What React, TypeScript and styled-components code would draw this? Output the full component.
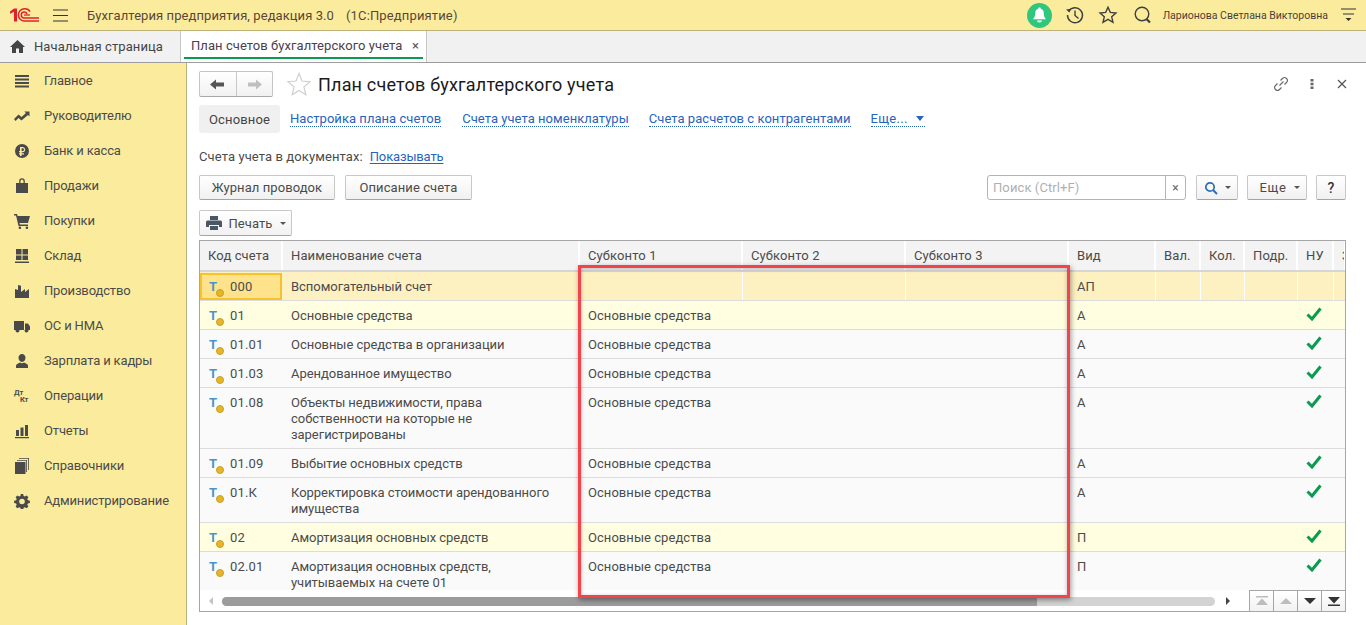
import React from "react";
import styled, { createGlobalStyle } from "styled-components";

const Global = createGlobalStyle`
  html, body { margin: 0; padding: 0; height: 625px; overflow: hidden; background: #fff; }
  body { font-family: Roboto, "Liberation Sans", sans-serif; font-size: 13px; color: #4b4b4b; }
  * { box-sizing: border-box; }
`;

const Page = styled.div`
  width: 1366px; height: 625px; display: flex; flex-direction: column; overflow: hidden;
`;

const TopBar = styled.header`
  height: 31px; flex: none; display: flex; align-items: center; background: #fbec9d;
  border-bottom: 1px solid #bdb27a; padding-left: 10px; position: relative;
`;
const Logo = styled.svg`width: 29px; height: 14px; flex: none;`;
const Burger = styled.svg`width: 15px; height: 13px; margin-left: 14px; flex: none;`;
const AppTitle = styled.span`
  margin-left: 19px; font-size: 13px; color: #5b4636; letter-spacing: 0.08px; white-space: pre;
`;
const AppKind = styled.span`margin-left: 12px; letter-spacing: 0.14px;`;
const TopRight = styled.div`
  margin-left: auto; display: flex; align-items: center; height: 100%; padding-right: 10px;
`;
const BellCircle = styled.span`
  width: 25px; height: 25px; border-radius: 50%; background: #2fc77d; display: flex;
  align-items: center; justify-content: center; margin-right: 13px;
`;
const TopIcon = styled.svg<{ $gap: number }>`
  width: 20px; height: 20px; flex: none; margin-right: ${(p) => p.$gap}px;
`;
const UserName = styled.span`font-size: 10.5px; color: #4a3f3a; white-space: nowrap; margin-left: 1px;`;
const UserMenu = styled.svg`width: 15px; height: 15px; margin-left: 13px; flex: none;`;

const TabBar = styled.nav`
  height: 32px; flex: none; display: flex; background: #f1f1f1; border-bottom: 1px solid #9c9c9c;
`;
const HomeTab = styled.div`
  width: 181px; display: flex; align-items: center; padding-left: 10px; gap: 9px;
  border-right: 1px solid #c6c6c6; font-size: 13px; letter-spacing: 0.1px; color: #444;
`;
const ActiveTab = styled.div`
  width: 246px; background: #fff; border-right: 1px solid #c6c6c6; display: flex; align-items: center;
  padding: 0 7px 3px 10px; position: relative; font-size: 13px; letter-spacing: 0.06px; color: #4a4050;
  justify-content: space-between;
  &::after { content: ""; position: absolute; left: 3px; right: 3px; bottom: 3px; height: 2px; background: #0a9a50; }
`;
const TabClose = styled.span`font-size: 13px; color: #555; line-height: 1;`;

const Body = styled.div`flex: 1; display: flex; min-height: 0;`;
const Sidebar = styled.aside`
  width: 187px; flex: none; background: #fbec9d; border-right: 1px solid #bdb27a;
`;
const SideItem = styled.div`
  height: 35px; display: flex; align-items: center; padding-left: 14px; gap: 14px;
  font-size: 13px; color: #4b4b4b; letter-spacing: -0.15px;
`;
const SideIcon = styled.svg`width: 16px; height: 16px; flex: none; fill: #4a4a4a;`;
const DtKt = styled.span`
  width: 16px; height: 16px; flex: none; display: flex; flex-direction: column; font-size: 7.5px; font-weight: 700;
  line-height: 7.5px; color: #4a4a4a; padding-top: 1px; letter-spacing: 0;
  span:last-child { margin-left: 6px; }
`;

const Main = styled.main`
  flex: 1; min-width: 0; padding: 8px 20px 0 12px; display: flex; flex-direction: column;
`;
const FormHead = styled.div`height: 26px; display: flex; align-items: center; flex: none;`;
const NavGroup = styled.div`
  width: 74px; height: 26px; display: flex; border: 1px solid #c4c4c4; border-bottom-color: #a8a8a8; border-radius: 2px;
  background: linear-gradient(#fff, #f1f1f1);
`;
const NavButton = styled.span<{ $first?: boolean }>`
  flex: 1; display: flex; align-items: center; justify-content: center;
  border-right: ${(p) => (p.$first ? "1px solid #c8c8c8" : "none")};
`;
const Arrow = styled.svg`width: 15px; height: 11px;`;
const FavStar = styled.svg`width: 24px; height: 24px; margin-left: 14px; flex: none;`;
const FormTitle = styled.h1`
  margin: 0 0 0 7px; font-weight: 400; font-size: 18px; color: #1a1a1a; letter-spacing: 0.19px; white-space: nowrap;
`;
const HeadTools = styled.div`margin-left: auto; display: flex; align-items: center; gap: 14.500px; margin-right: -4px;`;
const ToolIcon = styled.svg`width: 16px; height: 16px; flex: none;`;

const FormTabs = styled.div`height: 28px; margin-top: 8px; display: flex; align-items: center; flex: none;`;
const CurrentTab = styled.span`
  width: 81px; height: 28px; background: #f0f0f0; border-radius: 3px; display: flex; align-items: center;
  justify-content: center; color: #444; letter-spacing: 0.15px;
`;
const FormLink = styled.a<{ $gap: number; $wide?: boolean }>`
  margin-left: ${(p) => p.$gap}px; color: #2763c0; border-bottom: 1px dotted #2763c0; line-height: 15px;
  letter-spacing: ${(p) => (p.$wide ? "0.3px" : "0.04px")};
  display: inline-flex; align-items: center; white-space: nowrap;
`;
const MoreCaret = styled.span`
  width: 0; height: 0; margin-left: 8px; border-left: 4.5px solid transparent; border-right: 4.5px solid transparent;
  border-top: 5px solid #2763c0; margin-right: 1px;
`;

const InfoLine = styled.div`height: 16px; margin-top: 15px; display: flex; align-items: center; flex: none; letter-spacing: 0.1px;`;
const InfoLink = styled.a`margin-left: 7px; color: #2763c0; text-decoration: underline; text-underline-offset: 2px; letter-spacing: -0.15px;`;

const CommandRow = styled.div`height: 25px; margin-top: 11px; display: flex; align-items: stretch; flex: none;`;
const Button = styled.button<{ $w: number; $gap?: number; $inner?: number }>`
  width: ${(p) => p.$w}px; margin-left: ${(p) => p.$gap ?? 0}px; padding: 0; flex: none;
  font: inherit; color: #4b4b4b; letter-spacing: 0.08px;
  display: flex; align-items: center; justify-content: center; gap: ${(p) => p.$inner ?? 7}px;
  background: linear-gradient(#fff, #f1f1f1); border: 1px solid #c8c8c8; border-bottom-color: #a4a4a4; border-radius: 2px;
`;
const WideLabel = styled.span`letter-spacing: 0.6px; margin-left: 6px;`;
const Search = styled.div`
  width: 199px; margin-left: auto; display: flex; border: 1px solid #b4b4b4; border-radius: 3px; background: #fff;
`;
const SearchPlaceholder = styled.span`flex: 1; padding-left: 5px; color: #b0b0b0; line-height: 23px; letter-spacing: 0.1px;`;
const SearchClear = styled.span`
  width: 20px; border-left: 1px solid #b4b4b4; display: flex; align-items: center; justify-content: center; color: #666; font-size: 12px;
`;
const Caret = styled.span`
  width: 0; height: 0; border-left: 3px solid transparent; border-right: 3px solid transparent; border-top: 3.500px solid #555;
`;
const Help = styled.span`font-size: 14px; color: #333; font-weight: 500;`;

const PrintRow = styled.div`height: 26px; margin-top: 10px; display: flex; flex: none;`;

const Table = styled.div`
  margin-top: 4px; height: 372px; border: 1px solid #a6a6a6; position: relative; display: flex; flex-direction: column; flex: none;
  overflow: hidden;
`;
const COLS = "83px 297px 163px 163px 163px 87px 45px 44px 53px 36px 12px";
const HeadRow = styled.div`
  display: grid; grid-template-columns: ${COLS}; height: 31px; flex: none; border-bottom: 2px solid #d6d6d6;
`;
const HeadCell = styled.div`
  background: #f3f3f3; border-right: 2px solid #fff; padding-left: 8px; line-height: 29px; letter-spacing: 0.12px; white-space: nowrap; overflow: hidden; color: #4b4b4b;
`;
const Rows = styled.div`flex: 1; min-height: 0; overflow: hidden; background: #fff;`;
const Row = styled.div<{ $tone: "sel" | "hl" | "norm" }>`
  display: grid; grid-template-columns: ${COLS}; border-bottom: 1px solid #dcdcdc;
  background: ${(p) => (p.$tone === "sel" ? "#fdf1c2" : p.$tone === "hl" ? "#fffee0" : "#fafafa")};
`;
const Cell = styled.div<{ $sep?: boolean; $name?: boolean }>`
  padding: 7px 8px 5px; line-height: 16px; letter-spacing: ${(p) => (p.$name ? "-0.04px" : "0.05px")}; min-width: 0;
  border-right: ${(p) => (p.$sep ? "1px solid #fff" : "none")};
`;
const CodeCell = styled.div<{ $current?: boolean }>`
  display: flex; padding: 7px 0 5px 8px; line-height: 16px; letter-spacing: 0.15px;
  ${(p) => (p.$current ? "background:#fee28c; box-shadow: inset 0 0 0 2px #f6c129; margin: 1px 1px 0 0; padding-top: 6px; padding-bottom: 4px;" : "")}
`;
const AccountMark = styled.span`
  width: 22px; height: 16px; flex: none; position: relative; color: #4a94c9; font-weight: 700; font-size: 13px; line-height: 16px; padding-left: 1px;
  &::after { content: ""; position: absolute; left: 8px; top: 10px; width: 6px; height: 6px; border-radius: 50%; background: #e7b52c; border: 1px solid #c9a020; }
`;
const Check = styled.svg`width: 16px; height: 14px; display: block; margin: -1px 0 0 0;`;

const ScrollRow = styled.div`height: 21px; flex: none; display: flex; align-items: center; background: #fff;`;
const ScrollArrow = styled.span<{ $left?: boolean; $w: number }>`
  width: ${(p) => p.$w}px; flex: none; display: flex; justify-content: center;
  &::before { content: ""; width: 0; height: 0; border-top: 4px solid transparent; border-bottom: 4px solid transparent;
    ${(p) => (p.$left ? "border-right: 4px solid #c4c4c4;" : "border-left: 4px solid #444;")} }
`;
const Thumb = styled.div`
  width: 993px; height: 9px; border-radius: 5px; flex: none; overflow: hidden; background: #d3d3d3; display: flex; margin-top: 1px;
`;
const ThumbDark = styled.span`width: 815px; background: #9c9c9c;`;
const Pager = styled.div`height: 100%; width: 96px; margin-left: auto; display: flex; border-top: 1px solid #a6a6a6;`;
const PagerBtn = styled.span`
  flex: 1; display: flex; align-items: center; justify-content: center; border-left: 1px solid #a6a6a6;
  background: linear-gradient(#fff, #f2f2f2);
`;
const PagerIcon = styled.svg`width: 14px; height: 10px;`;

const Callout = styled.div`
  position: absolute; left: 378px; top: 24px; width: 492px; height: 333px; border: 3px solid #f4434a; pointer-events: none;
  box-shadow: 1px 2px 5px rgba(0,0,0,.4), inset 0 1px 4px rgba(0,0,0,.25);
`;

const sideIcons: Record<string, React.ReactNode> = {
  main: <path d="M1 2h14v2H1zM1 5.500h14v2H1zM1 9h14v2H1zM1 12.500h14v2H1z" />,
  boss: <path d="M0 11l4.500-4.500 3 2.500L12 5l-1.800-1.500H15.500V8.500L14 7 7.500 12.500 4.500 10 1.500 13z" />,
  bank: <path fillRule="evenodd" d="M8 1a7 7 0 1 1 0 14A7 7 0 0 1 8 1zM6 4v4H5v1.300h1v.9H5v1.300h1V13h1.600v-1.500H10v-1.300H7.600v-.9H9a2.700 2.700 0 0 0 0-5.300zm1.600 1.300H9a1.400 1.400 0 0 1 0 2.700H7.600z" />,
  sale: <path fillRule="evenodd" d="M2 5h3.200V3a2.800 2.800 0 0 1 5.600 0V5H14v10H2zM6.500 5h3V3a1.500 1.500 0 0 0-3 0z" />,
  buy: <path d="M0 1h3l.7 2H16l-2 7H5.500l.4 1.500H14V13H4.500L2 2.500H0zM5.500 13.500a1.300 1.300 0 1 1 0 2.500 1.300 1.300 0 0 1 0-2.500zM12.500 13.500a1.300 1.300 0 1 1 0 2.500 1.300 1.300 0 0 1 0-2.500z" />,
  stock: <path d="M2 1h5.500v5.500H2zM8.500 1H14v5.500H8.500zM2 7.500h5.500V12H2zM8.500 7.500H14V12H8.500zM1 13.500h14V15H1z" />,
  prod: <path d="M1 15V6l3 1V2l3 .8V9l4-3v3l4-3v9z" />,
  truck: <path d="M0 3h10v9H0zM11 5.500h3l2 3V12h-5zM3.500 10.500a2 2 0 1 1 0 4 2 2 0 0 1 0-4zM12.500 10.500a2 2 0 1 1 0 4 2 2 0 0 1 0-4z" />,
  staff: <path d="M8 1a3.500 3.500 0 0 1 3.500 3.800C11.500 7 10 9 8 9S4.500 7 4.500 4.800A3.500 3.500 0 0 1 8 1zM2 15v-2.500c0-1.500 3-2.500 4-3 1 1 3 1 4 0 1 .5 4 1.500 4 3V15z" />,
  report: <path d="M2 7h3v6H2zM6.500 4.500h3V13h-3zM11 2h3v11h-3zM1 14h14v1.200H1z" />,
  ref: <path d="M1 4h10.500v12H1zM3 2h10v12h-.8V2.800H3zM5 0h10v12h-.8V.8H5z" />,
  admin: <path fillRule="evenodd" d="M6.800 1h2.400l.4 2 1.300.6 1.800-1.100 1.700 1.700-1.100 1.800.6 1.300 2 .4v2.400l-2 .4-.6 1.300 1.100 1.800-1.700 1.700-1.800-1.100-1.300.6-.4 2H6.800l-.4-2-1.300-.6-1.800 1.100-1.700-1.700 1.100-1.800-.6-1.300-2-.4V7.700l2-.4.6-1.300-1.100-1.800 1.700-1.700 1.800 1.100 1.300-.6zM8 5.700a2.800 2.800 0 1 0 0 5.600 2.800 2.800 0 0 0 0-5.600z" />,
};

const sideItems: [string, string][] = [
  ["main", "Главное"], ["boss", "Руководителю"], ["bank", "Банк и касса"], ["sale", "Продажи"],
  ["buy", "Покупки"], ["stock", "Склад"], ["prod", "Производство"], ["truck", "ОС и НМА"],
  ["staff", "Зарплата и кадры"], ["dk", "Операции"], ["report", "Отчеты"], ["ref", "Справочники"], ["admin", "Администрирование"],
];

const heads = ["Код счета", "Наименование счета", "Субконто 1", "Субконто 2", "Субконто 3", "Вид", "Вал.", "Кол.", "Подр.", "НУ", "З"];

type Acc = { code: string; name: React.ReactNode; sub?: string; kind: string; nu?: boolean; tone: "sel" | "hl" | "norm" };
const FA = "Основные средства";
const accounts: Acc[] = [
  { code: "000", name: "Вспомогательный счет", kind: "АП", tone: "sel" },
  { code: "01", name: FA, sub: FA, kind: "А", nu: true, tone: "hl" },
  { code: "01.01", name: "Основные средства в организации", sub: FA, kind: "А", nu: true, tone: "norm" },
  { code: "01.03", name: "Арендованное имущество", sub: FA, kind: "А", nu: true, tone: "norm" },
  { code: "01.08", name: <>Объекты недвижимости, права<br />собственности на которые не<br />зарегистрированы</>, sub: FA, kind: "А", nu: true, tone: "norm" },
  { code: "01.09", name: "Выбытие основных средств", sub: FA, kind: "А", nu: true, tone: "norm" },
  { code: "01.К", name: <>Корректировка стоимости арендованного<br />имущества</>, sub: FA, kind: "А", nu: true, tone: "norm" },
  { code: "02", name: "Амортизация основных средств", sub: FA, kind: "П", nu: true, tone: "hl" },
  { code: "02.01", name: <>Амортизация основных средств,<br />учитываемых на счете 01</>, sub: FA, kind: "П", nu: true, tone: "norm" },
];

const stroke = { fill: "none", stroke: "#3f3f3f", strokeWidth: 1.4 } as const;

export default function App() {
  return (
    <Page>
      <Global />
      <TopBar>
        <Logo viewBox="0 0 29 14">
          <path d="M0 3.500L4 .5h3v13H4V3.800L0 5.800z" fill="#e3202a" />
          <path d="M20 3.800C19.200 1.800 17.300.8 14.500.8a6.100 6.100 0 0 0 0 12.200H29" fill="none" stroke="#e3202a" strokeWidth="1.500" />
          <path d="M17 6c-.5-1.300-1.500-2-2.700-2a3 3 0 0 0 0 6H29" fill="none" stroke="#e3202a" strokeWidth="1.500" />
          <path d="M14 7h6" stroke="#e3202a" strokeWidth="1.300" />
        </Logo>
        <Burger viewBox="0 0 15 13"><path d="M0 1h15M0 6.500h15M0 12h15" stroke="#333" strokeWidth="1" /></Burger>
        <AppTitle>Бухгалтерия предприятия, редакция 3.0<AppKind>(1С:Предприятие)</AppKind></AppTitle>
        <TopRight>
          <BellCircle>
            <svg width="15" height="16" viewBox="0 0 15 16"><path d="M7.500 0.500c.8 0 1.200.6 1.300 1.200 2.200.5 3 2.500 3 4.500 0 3 .8 4.500 2.200 6H1c1.400-1.500 2.200-3 2.200-6 0-2 .8-4 3-4.500C6.300 1.100 6.700.5 7.500.5zM5 13.500h5a2.500 2 0 0 1-5 0z" fill="#fff" /></svg>
          </BellCircle>
          <TopIcon viewBox="0 0 20 20" $gap={13}>
            <path d="M3.500 6.500A7.500 7.500 0 1 1 2.500 10" {...stroke} />
            <path d="M1 4.500l3.500 3 1.500-3.800z" fill="#3f3f3f" />
            <path d="M10 5.500v5l3.500 3" {...stroke} />
          </TopIcon>
          <TopIcon viewBox="0 0 20 20" $gap={15}>
            <path d="M10 2.200l2.300 5.200 5.700.6-4.300 3.800 1.300 5.600-5-3-5 3 1.300-5.600L2 8l5.700-.6z" {...stroke} />
          </TopIcon>
          <TopIcon viewBox="0 0 20 20" $gap={9}>
            <circle cx="9" cy="9" r="6.800" {...stroke} />
            <path d="M13.500 14l3.500 3.500" stroke="#3f3f3f" strokeWidth="2.200" />
          </TopIcon>
          <UserName>Ларионова Светлана Викторовна</UserName>
          <UserMenu viewBox="0 0 15 15"><path d="M0 1h15M2 6h11" stroke="#333" /><path d="M4.500 10h6l-3 3z" fill="#333" /></UserMenu>
        </TopRight>
      </TopBar>

      <TabBar>
        <HomeTab>
          <svg width="15" height="13" viewBox="0 0 15 13" style={{ flex: "none" }}><path d="M7.500 0L15 7h-2v6H9V8.500H6V13H2V7H0z" fill="#444" /></svg>
          Начальная страница
        </HomeTab>
        <ActiveTab>План счетов бухгалтерского учета<TabClose>×</TabClose></ActiveTab>
      </TabBar>

      <Body>
        <Sidebar>
          {sideItems.map(([k, label]) => (
            <SideItem key={k}>
              {k === "dk" ? (
                <DtKt><span>Дт</span><span>Кт</span></DtKt>
              ) : (
                <SideIcon viewBox="0 0 16 16">{sideIcons[k]}</SideIcon>
              )}
              {label}
            </SideItem>
          ))}
        </Sidebar>
        <Main>
          <FormHead>
            <NavGroup>
              <NavButton $first><Arrow viewBox="0 0 15 11"><path d="M0 5.500L6 .5v3h8v4H6v3z" fill="#555" /></Arrow></NavButton>
              <NavButton><Arrow viewBox="0 0 15 11"><path d="M15 5.500L9 .5v3H1v4h8v3z" fill="#c0c0c0" /></Arrow></NavButton>
            </NavGroup>
            <FavStar viewBox="0 0 24 24"><path d="M12 1.500l3 7.500 8 .7-6.100 5.200 1.900 7.800L12 18.400l-6.800 4.300 1.900-7.800L1 9.700 9 9z" fill="none" stroke="#cfcfcf" strokeWidth="1.200" /></FavStar>
            <FormTitle>План счетов бухгалтерского учета</FormTitle>
            <HeadTools>
              <ToolIcon viewBox="0 0 16 16"><path d="M6.500 9.500l4-4M7.500 4.500l2-2a2.800 2.800 0 0 1 4 4l-2 2M8.500 11.500l-2 2a2.800 2.800 0 0 1-4-4l2-2" fill="none" stroke="#666" strokeWidth="1.100" /></ToolIcon>
              <ToolIcon viewBox="0 0 16 16"><path d="M6.500 3h3v2.600h-3zM6.500 6.700h3v2.600h-3zM6.500 10.400h3V13h-3z" fill="#666" /></ToolIcon>
              <ToolIcon viewBox="0 0 16 16"><path d="M4 4l8 8M12 4l-8 8" stroke="#555" strokeWidth="1.200" /></ToolIcon>
            </HeadTools>
          </FormHead>

          <FormTabs>
            <CurrentTab>Основное</CurrentTab>
            <FormLink $gap={10}>Настройка плана счетов</FormLink>
            <FormLink $gap={21}>Счета учета номенклатуры</FormLink>
            <FormLink $gap={20}>Счета расчетов с контрагентами</FormLink>
            <FormLink $gap={20} $wide>Еще...<MoreCaret /></FormLink>
          </FormTabs>

          <InfoLine>Счета учета в документах:<InfoLink>Показывать</InfoLink></InfoLine>

          <CommandRow>
            <Button $w={136}>Журнал проводок</Button>
            <Button $w={127} $gap={10}>Описание счета</Button>
            <Search><SearchPlaceholder>Поиск (Ctrl+F)</SearchPlaceholder><SearchClear>×</SearchClear></Search>
            <Button $w={42} $gap={10}>
              <svg width="14" height="14" viewBox="0 0 14 14"><circle cx="6" cy="6" r="4.200" fill="none" stroke="#2a6db5" strokeWidth="1.700" /><path d="M9 9l4 4" stroke="#2a6db5" strokeWidth="2" /></svg>
              <Caret />
            </Button>
            <Button $w={60} $gap={9} $inner={8}><WideLabel>Еще</WideLabel><Caret /></Button>
            <Button $w={30} $gap={9}><Help>?</Help></Button>
          </CommandRow>

          <PrintRow>
            <Button $w={93}>
              <svg width="16" height="14" viewBox="0 0 16 14"><path d="M4 0h8v4H4zM1.500 4.500h13A1.500 1.500 0 0 1 16 6v5h-3V9H3v2H0V6a1.500 1.500 0 0 1 1.500-1.500zM4 10h8v4H4z" fill="#4a5866" /></svg>
              Печать<Caret />
            </Button>
          </PrintRow>

          <Table>
            <HeadRow>{heads.map((h) => <HeadCell key={h}>{h}</HeadCell>)}</HeadRow>
            <Rows>
              {accounts.map((a) => {
                const sep = a.tone === "sel";
                return (
                  <Row key={a.code} $tone={a.tone}>
                    <CodeCell $current={sep}><AccountMark>T</AccountMark>{a.code}</CodeCell>
                    <Cell $sep={sep} $name>{a.name}</Cell>
                    <Cell $sep={sep}>{a.sub}</Cell>
                    <Cell $sep={sep} />
                    <Cell $sep={sep} />
                    <Cell $sep={sep}>{a.kind}</Cell>
                    <Cell $sep={sep} /><Cell $sep={sep} /><Cell $sep={sep} />
                    <Cell $sep={sep}>
                      {a.nu && <Check viewBox="0 0 16 14"><path d="M1.500 7.500l4.500 4.500L14.500 1.500" fill="none" stroke="#0a9a50" strokeWidth="3" /></Check>}
                    </Cell>
                    <Cell />
                  </Row>
                );
              })}
            </Rows>
            <ScrollRow>
              <ScrollArrow $left $w={22} />
              <Thumb><ThumbDark /></Thumb>
              <ScrollArrow $w={26} />
              <Pager>
                <PagerBtn><PagerIcon viewBox="0 0 14 10"><path d="M1 0h12v1.500H1zM7 2.500l6 6.500H1z" fill="#bdbdbd" /></PagerIcon></PagerBtn>
                <PagerBtn><PagerIcon viewBox="0 0 14 10"><path d="M7 2l6 6H1z" fill="#bdbdbd" /></PagerIcon></PagerBtn>
                <PagerBtn><PagerIcon viewBox="0 0 14 10"><path d="M7 8L1 2h12z" fill="#333" /></PagerIcon></PagerBtn>
                <PagerBtn><PagerIcon viewBox="0 0 14 10"><path d="M7 7.500L1 1h12zM1 8.500h12V10H1z" fill="#333" /></PagerIcon></PagerBtn>
              </Pager>
            </ScrollRow>
            <Callout />
          </Table>
        </Main>
      </Body>
    </Page>
  );
}
